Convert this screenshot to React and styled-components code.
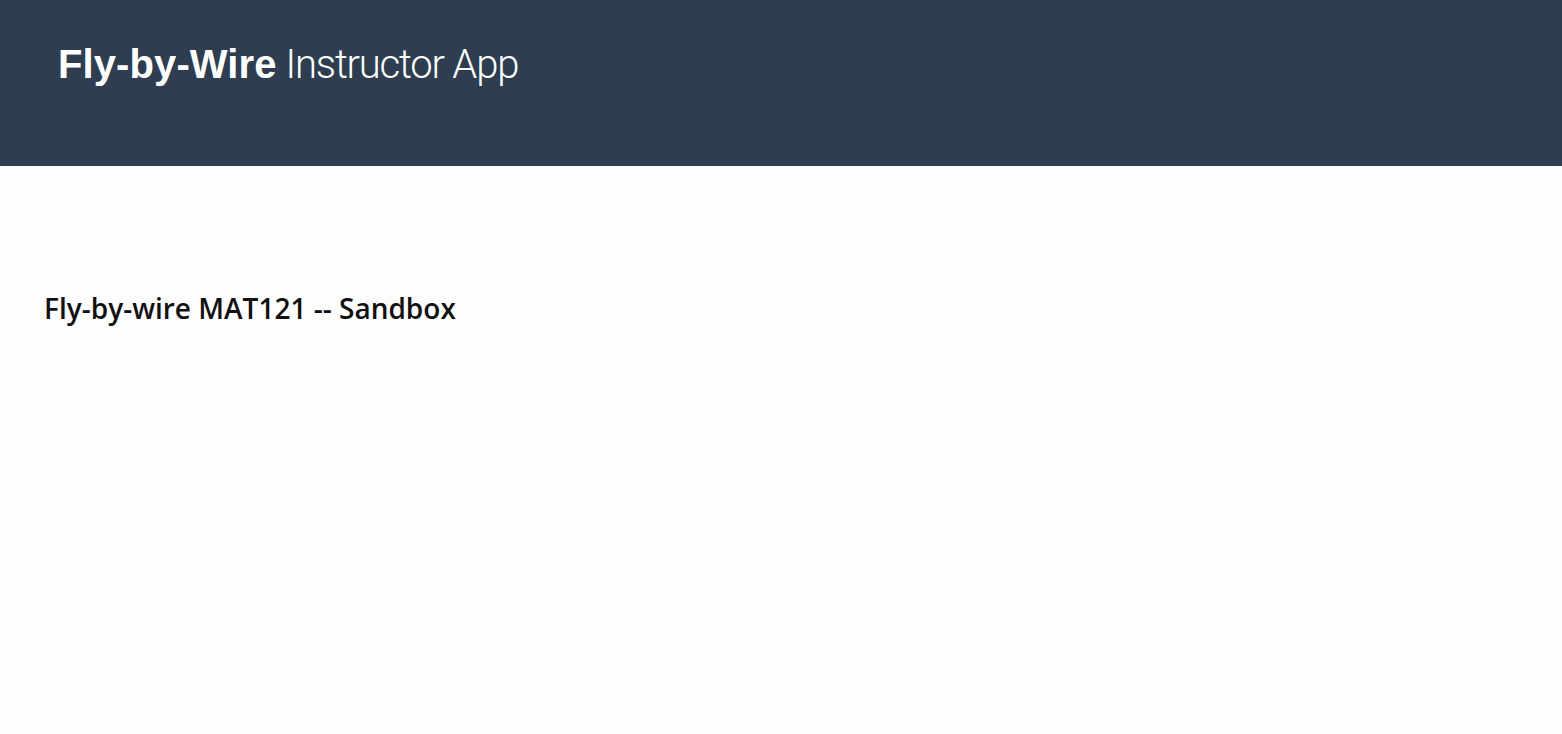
import React from "react";
import styled, { createGlobalStyle } from "styled-components";

const Global = createGlobalStyle`
  html, body { margin: 0; padding: 0; background: #fdfdfd; }
  body { font-family: "Open Sans", "Liberation Sans", sans-serif; }
`;

const Header = styled.header`
  height: 166px;
  background: #2e3e50;
  box-sizing: border-box;
  padding: 40px 0 0 58px;
`;

const Brand = styled.h1`
  margin: 0;
  font-size: 40px;
  line-height: 48px;
  color: #ffffff;
  font-weight: 400;
  white-space: nowrap;
  display: flex;
  align-items: baseline;
`;

const BrandStrong = styled.span`
  font-family: "Liberation Sans", Arial, sans-serif;
  font-weight: 700;
  letter-spacing: 0.1px;
`;

const BrandLight = styled.span`
  font-family: "Roboto", "Liberation Sans", sans-serif;
  font-weight: 300;
  margin-left: 9px;
  letter-spacing: -1.2px;
`;

const Main = styled.main`
  padding: 124px 44px 0;
`;

const Title = styled.h2`
  margin: 0;
  font-family: "Open Sans", sans-serif;
  font-weight: 600;
  font-size: 28px;
  line-height: 36px;
  color: #111111;
`;

export default function App() {
  return (
    <>
      <Global />
      <Header>
        <Brand>
          <BrandStrong>Fly-by-Wire</BrandStrong>
          <BrandLight>Instructor App</BrandLight>
        </Brand>
      </Header>
      <Main>
        <Title>Fly-by-wire MAT121 -- Sandbox</Title>
      </Main>
    </>
  );
}
